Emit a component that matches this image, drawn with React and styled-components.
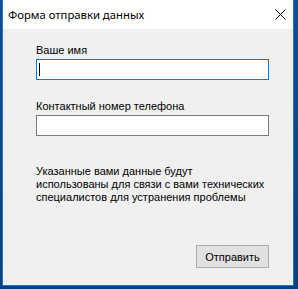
import React from "react";
import styled, { createGlobalStyle } from "styled-components";

const Global = createGlobalStyle`
  html, body { margin: 0; padding: 0; }
  body {
    width: 298px;
    height: 289px;
    overflow: hidden;
    background: linear-gradient(180deg, #0d4f92 0%, #0a3f7c 100%);
    font-family: "Liberation Sans", Arial, sans-serif;
  }
`;

const Desktop = styled.div`
  display: flex;
  padding-left: 2px;
  height: 289px;
  box-sizing: border-box;
`;

const Window = styled.div`
  width: 292px;
  height: 286px;
  box-sizing: border-box;
  border: 1px solid #1c74c6;
  border-top: none;
  display: flex;
  flex-direction: column;
  background: #f0f0f0;
`;

const TitleBar = styled.div`
  height: 29px;
  flex: none;
  background: #ffffff;
  display: flex;
  align-items: center;
  padding-left: 5px;
  padding-right: 7px;
`;

const Title = styled.div`
  flex: 1;
  font-family: "Noto Sans", "Open Sans", sans-serif;
  font-size: 11.3px;
  color: #000;
  line-height: 16px;
`;

const CloseIcon = styled.svg`
  display: block;
  width: 11px;
  height: 11px;
`;

const Body = styled.div`
  flex: 1;
  display: flex;
  flex-direction: column;
  padding: 15px 24px 17px 33px;
  width: 233px;
`;

const Label = styled.div`
  font-size: 11px;
  line-height: 13px;
  color: #000;
  margin-top: ${(p) => p.$top || 0}px;
  margin-bottom: 2px;
  white-space: nowrap;
`;

const TextBox = styled.div`
  height: 21px;
  box-sizing: border-box;
  background: #fff;
  border: 1px solid ${(p) => (p.$focused ? "#0078d7" : "#7a7a7a")};
  display: flex;
  align-items: center;
  padding-left: 2px;
`;

const Caret = styled.span`
  width: 1px;
  height: 13px;
  background: #000;
`;

const Note = styled.p`
  margin: 29px 0 0 0;
  font-size: 11px;
  line-height: 13px;
  color: #000;
  white-space: nowrap;
`;

const Footer = styled.div`
  margin-top: auto;
  display: flex;
  justify-content: flex-end;
`;

const Button = styled.button`
  width: 73px;
  height: 23px;
  box-sizing: border-box;
  background: #e1e1e1;
  border: 1px solid #adadad;
  font-family: "Liberation Sans", Arial, sans-serif;
  font-size: 11px;
  color: #000;
  padding: 0;
  margin: 0;
  border-radius: 0;
`;

export default function App() {
  return (
    <>
      <Global />
      <Desktop>
        <Window>
          <TitleBar>
            <Title>Форма отправки данных</Title>
            <CloseIcon viewBox="0 0 11 11">
              <path d="M0.5 0.5 L10.5 10.5 M10.5 0.5 L0.5 10.5" stroke="#000" strokeWidth="1" fill="none" />
            </CloseIcon>
          </TitleBar>
          <Body>
            <Label>Ваше имя</Label>
            <TextBox $focused>
              <Caret />
            </TextBox>
            <Label $top={20}>Контактный номер телефона</Label>
            <TextBox />
            <Note>
              Указанные вами данные будут
              <br />
              использованы для связи с вами технических
              <br />
              специалистов для устранения проблемы
            </Note>
            <Footer>
              <Button>Отправить</Button>
            </Footer>
          </Body>
        </Window>
      </Desktop>
    </>
  );
}
